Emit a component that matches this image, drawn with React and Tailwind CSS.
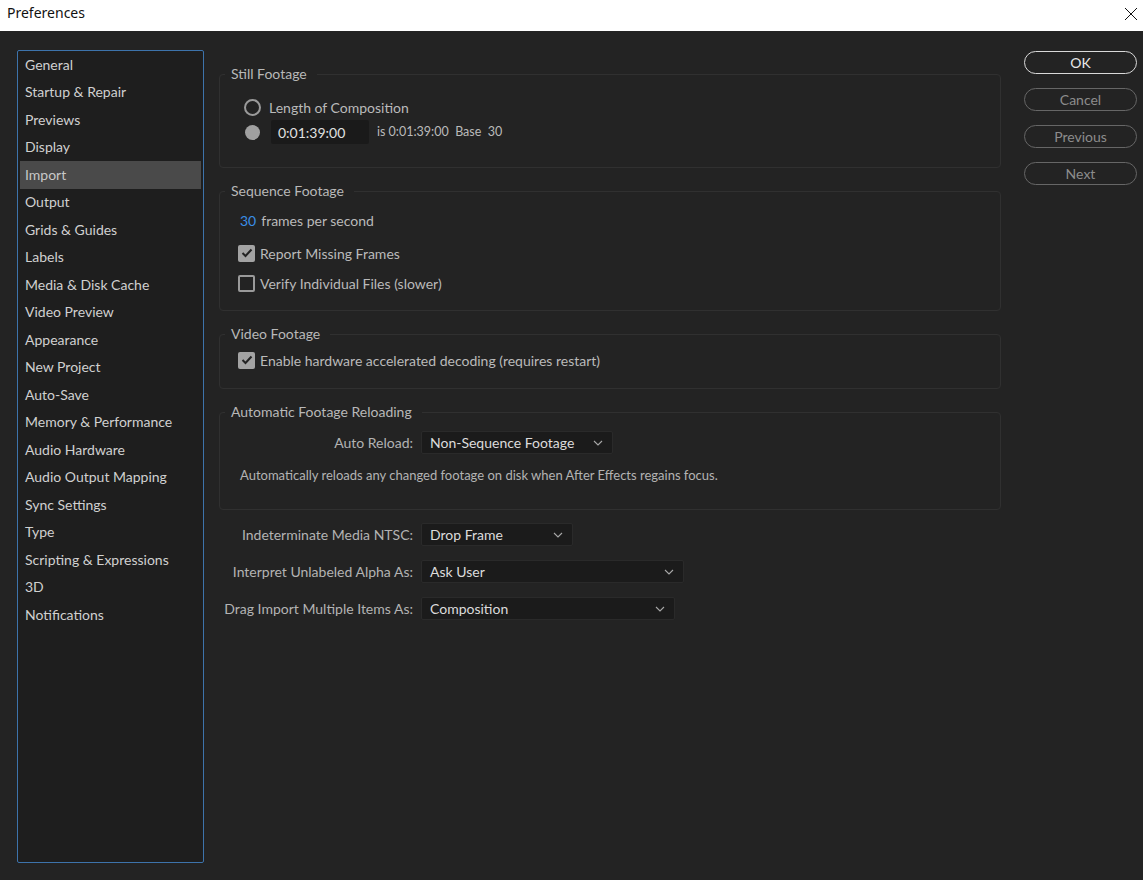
import React from 'react';

const sections = [
  'General', 'Startup & Repair', 'Previews', 'Display', 'Import', 'Output',
  'Grids & Guides', 'Labels', 'Media & Disk Cache', 'Video Preview', 'Appearance',
  'New Project', 'Auto-Save', 'Memory & Performance', 'Audio Hardware',
  'Audio Output Mapping', 'Sync Settings', 'Type', 'Scripting & Expressions', '3D',
  'Notifications',
];

function Chevron() {
  return (
    <svg width="10" height="6" viewBox="0 0 10 6" className="shrink-0">
      <path d="M1 1 L5 5 L9 1" fill="none" stroke="#a8a8a8" strokeWidth="1.1" />
    </svg>
  );
}

function Select({ value, width }) {
  return (
    <div
      className={`flex h-[23px] items-center justify-between rounded-[2px] border border-[#2a2a2a] bg-[#1b1b1b] pl-[8px] pr-[9px] text-[14px] text-[#dcdcdc] ${width}`}
    >
      <span>{value}</span>
      <Chevron />
    </div>
  );
}

function Checkbox({ checked }) {
  return checked ? (
    <div className="flex h-[17px] w-[17px] items-center justify-center rounded-[2px] bg-[#a3a3a3]">
      <svg width="12" height="10" viewBox="0 0 12 10">
        <path d="M1.5 5 L4.5 8 L10.5 1.5" fill="none" stroke="#232323" strokeWidth="2" />
      </svg>
    </div>
  ) : (
    <div className="h-[17px] w-[17px] rounded-[2px] border-2 border-[#9a9a9a]" />
  );
}

function Group({ title, className = '', children }) {
  return (
    <fieldset className={`rounded-[4px] border border-[#303030] ${className}`}>
      <legend className="ml-[5px] pl-[6px] pr-[10px] text-[14px] leading-[20px] text-[#b8b8b8]">
        {title}
      </legend>
      {children}
    </fieldset>
  );
}

function PillButton({ label, primary }) {
  return (
    <div
      className={`flex h-[23px] w-[113px] items-center justify-center rounded-full text-[14px] ${
        primary ? 'border-[1.5px] border-[#d9d9d9] text-[#e8e8e8]' : 'border-[1.5px] border-[#666666] text-[#8c8c8c]'
      }`}
    >
      {label}
    </div>
  );
}

export default function App() {
  return (
    <div className="flex h-[880px] w-[1143px] flex-col bg-[#232323]" style={{ fontFamily: 'Lato, "Noto Sans", sans-serif' }}>
      <div
        className="flex h-[31px] shrink-0 items-center justify-between bg-white pl-[7px] pr-[3px] text-[14px] text-[#111]"
        style={{ fontFamily: '"Noto Sans", "Open Sans", sans-serif' }}
      >
        <span className="-mt-[6px]">Preferences</span>
        <svg width="14" height="14" viewBox="0 0 14 14" className="mr-[2px] -mt-[4px]">
          <path d="M1 1 L13 13 M13 1 L1 13" stroke="#111" strokeWidth="1" />
        </svg>
      </div>

      <div className="flex flex-1">
        <div className="ml-[17px] mt-[19px] h-[813px] w-[187px] rounded-[2px] border border-[#3d73ab] bg-[#1e1e1e] px-[2px]">
          {sections.map((s) => (
            <div
              key={s}
              className={`flex h-[27.5px] items-center pb-[1px] pl-[5px] text-[14px] ${
                s === 'Import' ? 'bg-[#4a4a4a] text-[#c8c8c8]' : 'text-[#d0d0d0]'
              }`}
            >
              {s}
            </div>
          ))}
        </div>

        <div className="ml-[15px] mt-[33px] flex w-[782px] flex-col">
          <Group title="Still Footage" className="pb-[23px]">
            <div className="flex flex-col gap-[2px] pl-[24px] pt-[12px]">
              <div className="flex h-[22px] items-center">
                <div className="h-[17px] w-[17px] rounded-full border-2 border-[#9a9a9a]" />
                <span className="ml-[8px] text-[14px] text-[#bababa]">Length of Composition</span>
              </div>
              <div className="flex h-[24px] items-center">
                <div className="ml-[1px] h-[15px] w-[15px] rounded-full bg-[#a0a0a0]" />
                <div className="ml-[11px] flex h-[24px] w-[98px] items-center rounded-[2px] bg-[#1a1a1a] pl-[7px] text-[14px] text-[#e0e0e0]">
                  0:01:39:00
                </div>
                <span className="ml-[8px] text-[12.5px] text-[#bababa]">
                  is 0:01:39:00&nbsp;&nbsp;Base&nbsp;&nbsp;30
                </span>
              </div>
            </div>
          </Group>

          <Group title="Sequence Footage" className="mt-[13px] pb-[17px]">
            <div className="pl-[20px] pt-[9px]">
              <div className="flex h-[20px] items-center text-[14px]">
                <span className="text-[#3a8ee6]">30</span>
                <span className="ml-[5px] text-[#bababa]">frames per second</span>
              </div>
              <div className="mt-[13px] flex h-[20px] items-center">
                <div className="-ml-[2px]"><Checkbox checked /></div>
                <span className="ml-[5px] text-[14px] text-[#bababa]">Report Missing Frames</span>
              </div>
              <div className="mt-[10px] flex h-[20px] items-center">
                <div className="-ml-[2px]"><Checkbox /></div>
                <span className="ml-[5px] text-[14px] text-[#bababa]">Verify Individual Files (slower)</span>
              </div>
            </div>
          </Group>

          <Group title="Video Footage" className="mt-[13px] pb-[18px]">
            <div className="pl-[18px] pt-[6px]">
              <div className="flex h-[20px] items-center">
                <Checkbox checked />
                <span className="ml-[5px] text-[14px] text-[#bababa]">
                  Enable hardware accelerated decoding (requires restart)
                </span>
              </div>
            </div>
          </Group>

          <Group title="Automatic Footage Reloading" className="mt-[13px] pb-[24px]">
            <div className="pt-[9px]">
              <div className="flex items-center">
                <span className="w-[193px] text-right text-[14px] text-[#b3b3b3]">Auto Reload:</span>
                <div className="ml-[8px]">
                  <Select value="Non-Sequence Footage" width="w-[192px]" />
                </div>
              </div>
              <div className="mt-[13px] flex h-[18px] items-center pl-[20px] text-[13px] text-[#b3b3b3]">
                Automatically reloads any changed footage on disk when After Effects regains focus.
              </div>
            </div>
          </Group>

          <div className="mt-[13px] flex flex-col gap-[14px]">
            {[
              ['Indeterminate Media NTSC:', 'Drop Frame', 'w-[152px]'],
              ['Interpret Unlabeled Alpha As:', 'Ask User', 'w-[263px]'],
              ['Drag Import Multiple Items As:', 'Composition', 'w-[254px]'],
            ].map(([label, value, w]) => (
              <div key={label} className="flex items-center">
                <span className="w-[194px] whitespace-nowrap text-right text-[14px] text-[#b3b3b3]">{label}</span>
                <div className="ml-[8px]">
                  <Select value={value} width={w} />
                </div>
              </div>
            ))}
          </div>
        </div>

        <div className="ml-[23px] mt-[20px] flex flex-col gap-[14px]">
          <PillButton label="OK" primary />
          <PillButton label="Cancel" />
          <PillButton label="Previous" />
          <PillButton label="Next" />
        </div>
      </div>
    </div>
  );
}
